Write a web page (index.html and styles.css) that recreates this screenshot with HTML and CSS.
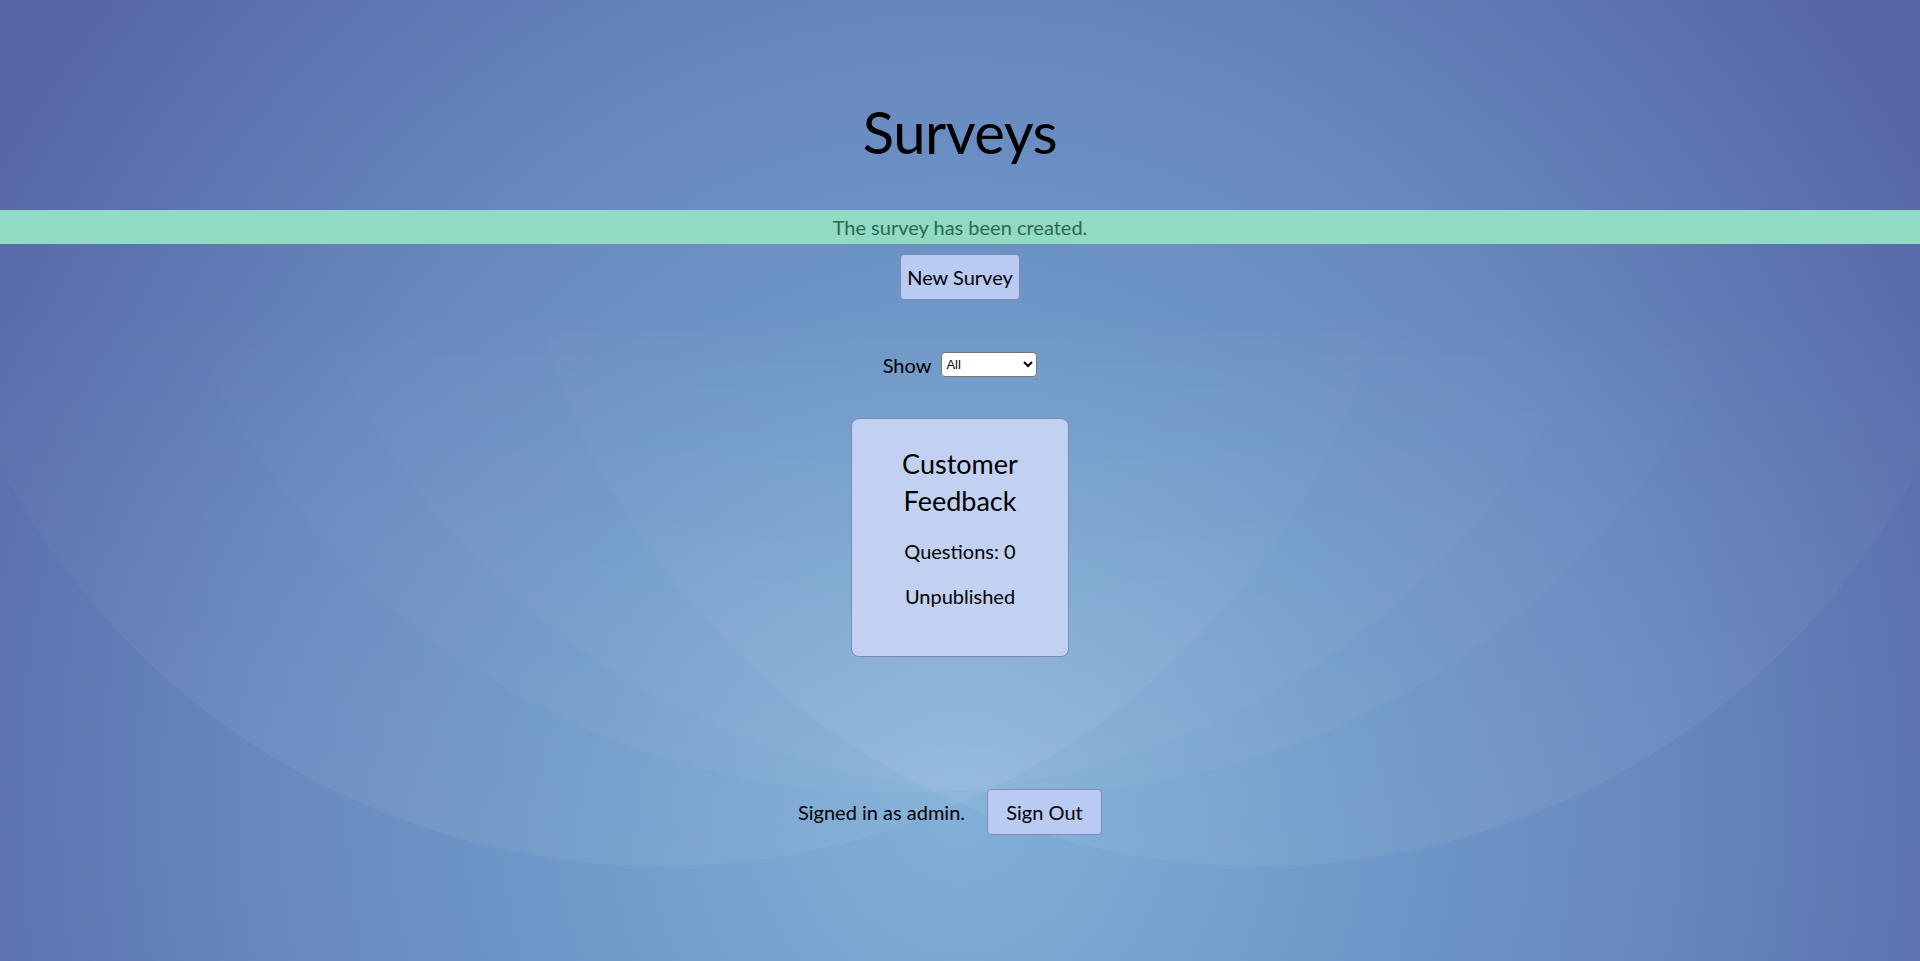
FILE: index.html
```html
<!DOCTYPE html>
<html lang="en">
<head>
<meta charset="utf-8">
<title>Surveys</title>
<link rel="stylesheet" href="styles.css">
</head>
<body>
<div class="page">
  <header class="header">
    <h1 class="title">Surveys</h1>
  </header>
  <div class="flash">The survey has been created.</div>
  <main class="main">
    <button class="btn btn-new" type="button">New Survey</button>
    <div class="filter">
      <label class="filter-label" for="show">Show</label>
      <select class="filter-select" id="show">
        <option>All</option>
        <option>Published</option>
        <option>Unpublished</option>
      </select>
    </div>
    <div class="cards">
      <div class="card">
        <h2 class="card-title">Customer Feedback</h2>
        <p class="card-line">Questions: 0</p>
        <p class="card-line">Unpublished</p>
      </div>
    </div>
  </main>
  <footer class="footer">
    <span class="signed">Signed in as admin.</span>
    <button class="btn btn-out" type="button">Sign Out</button>
  </footer>
</div>
</body>
</html>
```
FILE: styles.css
```css
html, body {
  margin: 0;
  padding: 0;
  height: 100%;
}
body {
  font-family: "Lato", "Open Sans", sans-serif;
  color: #000;
  min-height: 961px;
  background-color: #6a8cc0;
  background-image:
    url("data:image/svg+xml;utf8,<svg xmlns='http://www.w3.org/2000/svg' width='1920' height='961' viewBox='0 0 1920 961'><defs><linearGradient id='a' gradientUnits='userSpaceOnUse' x1='0' y1='0' x2='0' y2='961'><stop offset='0.3' stop-color='white' stop-opacity='0'/><stop offset='0.9' stop-color='white' stop-opacity='0.06'/></linearGradient><linearGradient id='b' gradientUnits='userSpaceOnUse' x1='0' y1='0' x2='0' y2='961'><stop offset='0.3' stop-color='white' stop-opacity='0'/><stop offset='0.85' stop-color='white' stop-opacity='0.035'/></linearGradient></defs><circle cx='661' cy='120' r='746' fill='url(%23a)'/><circle cx='1259' cy='120' r='746' fill='url(%23a)'/><circle cx='1027' cy='28' r='765' fill='url(%23b)'/><circle cx='893' cy='28' r='765' fill='url(%23b)'/></svg>"),
    radial-gradient(ellipse 1150px 1250px at 960px 800px, #82b0d7 0%, #6f98c8 36%, #6889bf 60%, #5565a5 100%);
  background-repeat: no-repeat;
  background-size: 1920px 961px, auto;
}
.page {
  display: flex;
  flex-direction: column;
  align-items: stretch;
  text-align: center;
}
.header {
  padding-top: 92px;
}
.title {
  margin: 0 0 38px;
  font-size: 58px;
  letter-spacing: -0.5px;
  font-weight: 400;
  line-height: 80px;
}
.flash {
  background: #91dac4;
  color: #2e6a4c;
  font-size: 20px;
  height: 34px;
  line-height: 34px;
}
.main {
  display: flex;
  flex-direction: column;
  align-items: center;
  padding-top: 10px;
}
.btn {
  font-family: inherit;
  font-size: 20px;
  color: #000;
  background: #b9cbf2;
  border: 1px solid #7d8cb4;
  border-radius: 4px;
  height: 46px;
  padding: 0;
  white-space: nowrap;
  cursor: pointer;
}
.btn-new {
  width: 120px;
}
.filter {
  display: flex;
  align-items: center;
  gap: 10px;
  margin-top: 52px;
  height: 25px;
}
.filter-label {
  font-size: 20px;
}
.filter-select {
  width: 96px;
  height: 25px;
  font-family: "Liberation Sans", Arial, sans-serif;
  font-size: 13px;
  background: #fff;
  border: 1px solid #767676;
  border-radius: 4px;
}
.cards {
  display: flex;
  justify-content: center;
  margin-top: 41px;
}
.card {
  box-sizing: border-box;
  width: 218px;
  height: 239px;
  padding: 26px 16px;
  background: #c2d1f2;
  border: 1px solid #7b8ab4;
  border-radius: 8px;
}
.card-title {
  margin: 0;
  font-size: 27px;
  font-weight: 400;
  line-height: 37px;
}
.card-line {
  margin: 20px 0 0;
  font-size: 20px;
  line-height: 25px;
}
.footer {
  display: flex;
  justify-content: center;
  align-items: center;
  gap: 22px;
  margin-top: 132px;
  padding-right: 20px;
}
.signed {
  font-size: 20px;
}
.btn-out {
  width: 115px;
}
```
